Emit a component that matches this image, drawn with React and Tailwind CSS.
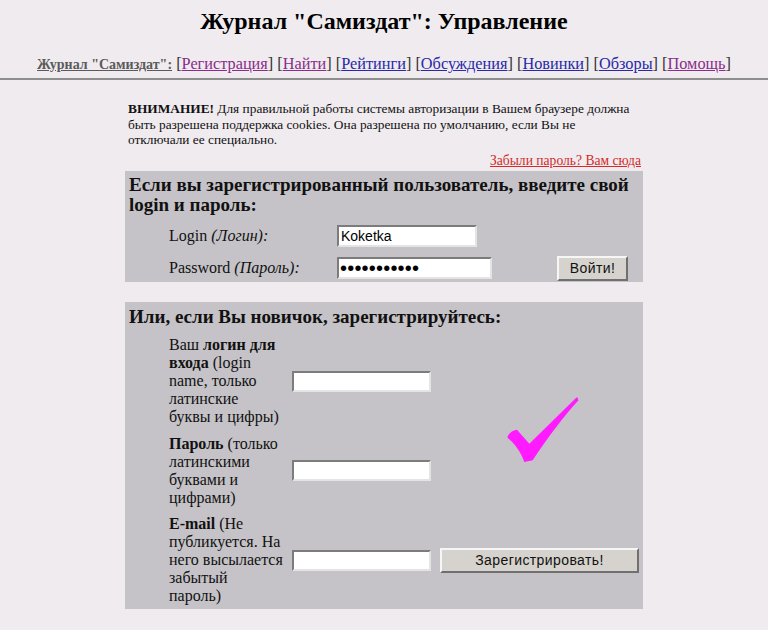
export default function App() {
  const links = [
    ["Регистрация", true],
    ["Найти", true],
    ["Рейтинги", false],
    ["Обсуждения", false],
    ["Новинки", false],
    ["Обзоры", false],
    ["Помощь", true],
  ];

  const inputCls =
    "block bg-white border-2 border-t-[#7c7c7c] border-l-[#7c7c7c] border-b-[#e4e4e4] border-r-[#e4e4e4] outline-none px-[2px] font-['Liberation_Sans',Arial,sans-serif] text-[14px] text-black";
  const btnCls =
    "bg-[#d6d3ce] border-2 border-t-[#f6f6f6] border-l-[#f6f6f6] border-b-[#707070] border-r-[#707070] font-['Liberation_Sans',Arial,sans-serif] text-[14px] tracking-[0.4px] text-[#111]";

  return (
    <div className="min-h-screen bg-[#efebef] pt-[7px] pb-[20px] font-['Liberation_Serif','Times_New_Roman',serif] text-[#111]">
      <h1 className="text-center text-[24px] leading-[28px] font-bold text-black">
        Журнал "Самиздат": Управление
      </h1>

      <div className="mt-[20px] text-center text-[16.3px] leading-[18px] whitespace-nowrap text-[#333]">
        <a className="text-[14px] font-bold text-[#5a5a5a] underline">Журнал "Самиздат":</a>
        {links.map(([t, visited]) => (
          <span key={t}>
            {" "}[
            <a
              className={
                visited
                  ? "text-[#8a2d8a] underline"
                  : "text-[#2828a8] underline"
              }
            >
              {t}
            </a>
            ]
          </span>
        ))}
      </div>

      <div className="mt-[4px] border-t-2 border-[#8e8e8e]" />

      <div className="w-[518px] mx-auto mt-[21px]">
        <div className="px-[3px] text-[13.35px] leading-[15.5px] whitespace-nowrap">
          <b>ВНИМАНИЕ!</b> Для правильной работы системы авторизации в Вашем браузере должна
          <br />
          быть разрешена поддержка cookies. Она разрешена по умолчанию, если Вы не
          <br />
          отключали ее специально.
        </div>
        <div className="mt-[5px] pr-[2px] text-right text-[13.6px] leading-[15.5px]">
          <a className="text-[#d42a2a] underline">Забыли пароль? Вам сюда</a>
        </div>

        <div className="mt-[3px] bg-[#c5c3c7] pt-[4px]">
          <h3 className="px-[4px] text-[19px] leading-[20px] font-bold text-[#111]">
            Если вы зарегистрированный пользователь, введите свой
            <br />
            login и пароль:
          </h3>
          <div className="mt-[7px] flex h-[28px] items-center pl-[44px] text-[16px] leading-[18px]">
            <div className="w-[168px]">
              Login <i>(Логин):</i>
            </div>
            <input readOnly value="Koketka" className={inputCls + " w-[140px] h-[22px]"} />
          </div>
          <div className="mt-[4px] flex h-[28px] items-center pl-[44px] pr-[15px] text-[16px] leading-[18px]">
            <div className="w-[168px]">
              Password <i>(Пароль):</i>
            </div>
            <div className="flex h-[22px] w-[155px] items-center overflow-hidden bg-white border-2 border-t-[#7c7c7c] border-l-[#7c7c7c] border-b-[#e4e4e4] border-r-[#e4e4e4] px-[1px] font-['Liberation_Sans',Arial,sans-serif] text-[20px] tracking-[0.2px] leading-none text-black">
              •••••••••••
            </div>
            <button className={btnCls + " ml-auto h-[25px] w-[71px]"}>Войти!</button>
          </div>
        </div>

        <div className="mt-[20px] bg-[#c5c3c7] pt-[4px] pb-[4px]">
          <h3 className="px-[4px] text-[19px] leading-[21px] font-bold text-[#111]">
            Или, если Вы новичок, зарегистрируйтесь:
          </h3>
          <div className="mt-[9px] grid grid-cols-[123px_148px_199px] gap-y-[8.5px] pl-[44px] text-[16px] leading-[18px] items-center">
            <div className="whitespace-nowrap">
              Ваш <b>логин для</b>
              <br />
              <b>входа</b> (login
              <br />
              name, только
              <br />
              латинские
              <br />
              буквы и цифры)
            </div>
            <input readOnly value="" className={inputCls + " w-[139px] h-[21px]"} />
            <div className="row-span-2 flex h-full items-center justify-center">
              <svg width="84" height="76" viewBox="0 0 84 76" className="ml-[6px] mt-[18px]">
                <path
                  d="M6.7 44 C 9 40, 13 37.7, 16 37.7 L 28.3 51.7 L 76 5 L 77.5 8.3 C 62 25, 45 48, 31.7 68.3 L 23.3 70 C 20 60, 14 52, 6.7 46 Z"
                  fill="#ff1aff"
                />
              </svg>
            </div>
            <div className="whitespace-nowrap">
              <b>Пароль</b> (только
              <br />
              латинскими
              <br />
              буквами и
              <br />
              цифрами)
            </div>
            <input readOnly value="" className={inputCls + " w-[139px] h-[21px]"} />
            <div className="whitespace-nowrap">
              <b>E-mail</b> (Не
              <br />
              публикуется. На
              <br />
              него высылается
              <br />
              забытый
              <br />
              пароль)
            </div>
            <input readOnly value="" className={inputCls + " w-[139px] h-[21px]"} />
            <button className={btnCls + " h-[25px] w-[199px]"}>Зарегистрировать!</button>
          </div>
        </div>
      </div>
    </div>
  );
}
